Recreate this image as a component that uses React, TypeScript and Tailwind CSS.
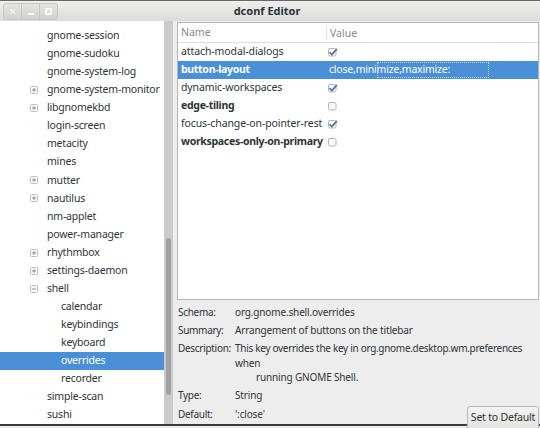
const font = { fontFamily: '"Noto Sans", "DejaVu Sans", sans-serif' };

type Node = { name: string; depth: number; expander?: "plus" | "minus"; selected?: boolean };

const tree: Node[] = [
  { name: "gnome-session", depth: 0 },
  { name: "gnome-sudoku", depth: 0 },
  { name: "gnome-system-log", depth: 0 },
  { name: "gnome-system-monitor", depth: 0, expander: "plus" },
  { name: "libgnomekbd", depth: 0, expander: "plus" },
  { name: "login-screen", depth: 0 },
  { name: "metacity", depth: 0 },
  { name: "mines", depth: 0 },
  { name: "mutter", depth: 0, expander: "plus" },
  { name: "nautilus", depth: 0, expander: "plus" },
  { name: "nm-applet", depth: 0 },
  { name: "power-manager", depth: 0 },
  { name: "rhythmbox", depth: 0, expander: "plus" },
  { name: "settings-daemon", depth: 0, expander: "plus" },
  { name: "shell", depth: 0, expander: "minus" },
  { name: "calendar", depth: 1 },
  { name: "keybindings", depth: 1 },
  { name: "keyboard", depth: 1 },
  { name: "overrides", depth: 1, selected: true },
  { name: "recorder", depth: 1 },
  { name: "simple-scan", depth: 0 },
  { name: "sushi", depth: 0 },
];

type Key = { name: string; bold?: boolean; value: "on" | "off" | string; selected?: boolean };

const keys: Key[] = [
  { name: "attach-modal-dialogs", value: "on" },
  { name: "button-layout", bold: true, value: "close,minimize,maximize:", selected: true },
  { name: "dynamic-workspaces", value: "on" },
  { name: "edge-tiling", bold: true, value: "off" },
  { name: "focus-change-on-pointer-rest", value: "on" },
  { name: "workspaces-only-on-primary", bold: true, value: "off" },
];

function Expander({ kind }: { kind: "plus" | "minus" }) {
  return (
    <svg width="8" height="8" viewBox="0 0 8 8" className="shrink-0">
      <rect x="0.5" y="0.5" width="7" height="7" rx="1" fill="#fafafa" stroke="#bdbdbd" />
      <path d="M2 4h4" stroke="#8e8e8e" />
      {kind === "plus" && <path d="M4 2v4" stroke="#8e8e8e" />}
    </svg>
  );
}

function Check({ on }: { on: boolean }) {
  return (
    <svg width="11" height="11" viewBox="0 0 11 11">
      <rect x="1.5" y="1.5" width="7.5" height="7.5" rx="1.5" fill="#fbfbfb" stroke="#b6b6b6" />
      {on && (
        <path d="M2.4 5.2l2.5 2.4 5-5.8" fill="none" stroke="#5b7a99" strokeWidth="1.8" strokeLinejoin="round" />
      )}
    </svg>
  );
}

function TitleBar() {
  return (
    <div className="relative flex h-[21px] items-center border-t border-[#6a6a6a] bg-gradient-to-b from-[#efefee] to-[#dcdcdb]">
      <div className="ml-[3px] flex h-[17px] overflow-hidden rounded-[3px] border border-[#c6c6c5] bg-gradient-to-b from-[#e4e4e3] to-[#d2d2d1]">
        <div className="flex w-[18px] items-center justify-center border-r border-[#c6c6c5] text-[9px] leading-none text-[#f8f8f8]">✕</div>
        <div className="flex w-[18px] items-end justify-center border-r border-[#c6c6c5] pb-[4px]">
          <div className="h-[2px] w-[6px] bg-[#f8f8f8]" />
        </div>
        <div className="flex w-[17px] items-center justify-center">
          <div className="h-[7px] w-[7px] border-2 border-[#f8f8f8]" />
        </div>
      </div>
      <div className="absolute inset-x-0 top-0 flex h-[20px] items-center justify-center pr-[6px] text-[11px] font-bold text-[#2e3436]">
        dconf Editor
      </div>
    </div>
  );
}

function Sidebar() {
  return (
    <div className="flex w-[173px] shrink-0">
      <div className="flex w-[164px] flex-col bg-white pt-[6px] text-[10.5px] tracking-[-0.2px] text-[#2e3436]">
        {tree.map((n) => (
          <div
            key={n.name}
            className={`flex h-[18.14px] items-center whitespace-nowrap ${n.selected ? "bg-[#4a90d9] text-white" : ""}`}
          >
            <div className="flex w-[47px] shrink-0 justify-end pr-[9px]">
              {n.expander && <Expander kind={n.expander} />}
            </div>
            <span className={n.depth === 1 ? "pl-[14px]" : ""}>{n.name}</span>
          </div>
        ))}
      </div>
      <div className="flex w-[9px] flex-col bg-[#cbcbcb] px-[2px]">
        <div className="mt-[217px] h-[157px] rounded-full bg-[#a2a2a2]" />
      </div>
    </div>
  );
}

function KeyTable() {
  return (
    <div className="mr-[1px] ml-[4px] flex h-[278px] shrink-0 flex-col border border-[#b6b6b3] bg-white text-[10.5px] text-[#2e3436]">
      <div className="flex h-[20px] items-center border-b border-[#dcdcdc] text-[#888a85]">
        <div className="w-[148px] pl-[3px]">Name</div>
        <div className="h-[14px] border-l border-[#e2e2e2] pl-[3px]">Value</div>
      </div>
      {keys.map((k) => (
        <div
          key={k.name}
          className={`relative flex h-[18px] items-center whitespace-nowrap ${k.selected ? "bg-[#4a90d9] text-white" : ""}`}
        >
          <div className={`w-[149px] shrink-0 pl-[3px] ${k.bold ? "font-bold tracking-[-0.3px]" : "tracking-[-0.1px]"}`}>
            {k.name}
          </div>
          {k.value === "on" || k.value === "off" ? (
            <div className="pt-[1px]">
              <Check on={k.value === "on"} />
            </div>
          ) : (
            <>
              <div className="pl-[2px] tracking-[-0.2px]">{k.value}</div>
              <div className="absolute top-[1px] left-[199px] h-[16px] w-[112px] border border-dotted border-[#c8dcf2]" />
            </>
          )}
        </div>
      ))}
    </div>
  );
}

function Details() {
  const row = "flex h-[18px] items-center whitespace-nowrap";
  const label = "w-[57px] shrink-0 tracking-[-0.3px]";
  return (
    <div className="relative flex flex-col pt-[3px] pl-[5px] text-[10px] tracking-[-0.15px] text-[#2e3436]">
      <div className={row}>
        <div className={label}>Schema:</div>
        <div>org.gnome.shell.overrides</div>
      </div>
      <div className={row}>
        <div className={label}>Summary:</div>
        <div>Arrangement of buttons on the titlebar</div>
      </div>
      <div className="flex pt-[2px] whitespace-nowrap">
        <div className={label}>Description:</div>
        <div className="flex flex-col leading-[14.5px]">
          <div className="tracking-[-0.3px]">This key overrides the key in org.gnome.desktop.wm.preferences</div>
          <div>when</div>
          <div className="pl-[21px]">running GNOME Shell.</div>
        </div>
      </div>
      <div className={`${row} mt-[2px]`}>
        <div className={label}>Type:</div>
        <div>String</div>
      </div>
      <div className={`${row} mt-[1px]`}>
        <div className={label}>Default:</div>
        <div>':close'</div>
      </div>
      <button className="absolute right-[1px] bottom-[-6px] h-[24px] w-[72px] rounded-[3px] border border-[#b9b9b6] bg-gradient-to-b from-[#f4f4f3] to-[#e2e2e0] text-[10.5px] tracking-[-0.2px] text-[#2e3436]">
        Set to Default
      </button>
    </div>
  );
}

export default function App() {
  return (
    <div className="h-[428px] w-[540px] overflow-hidden bg-[#ededed]" style={font}>
      <TitleBar />
      <div className="flex h-[405px] border-b-2 border-[#3c3c3c]">
        <Sidebar />
        <div className="flex flex-1 flex-col pt-[1px]">
          <KeyTable />
          <Details />
        </div>
      </div>
    </div>
  );
}
